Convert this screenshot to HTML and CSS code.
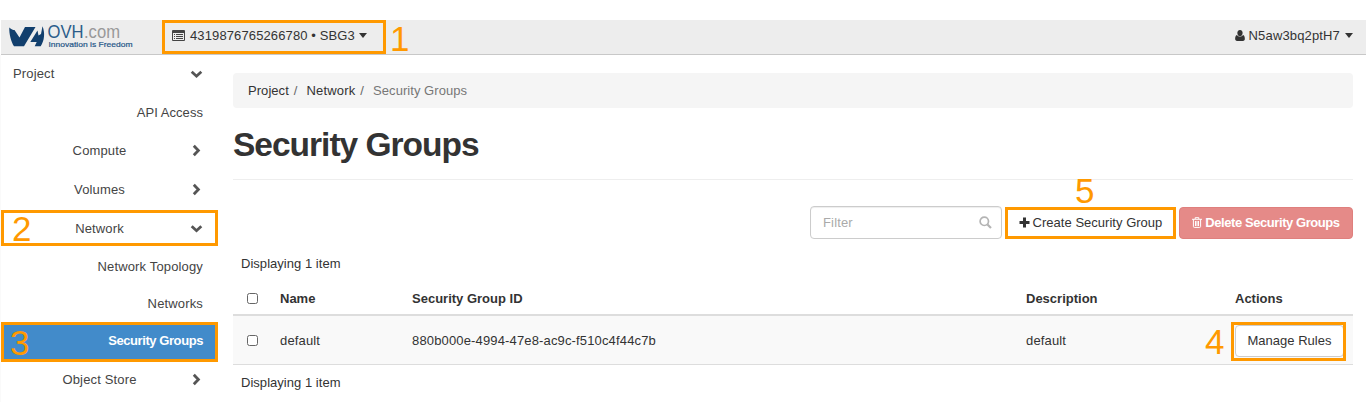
FILE: index.html
```html
<!DOCTYPE html>
<html lang="en">
<head>
<meta charset="utf-8">
<title>Security Groups</title>
<link rel="stylesheet" href="styles.css">
</head>
<body>
<header class="topbar">
  <svg class="logo" width="128" height="30" viewBox="0 0 128 30">
    <path class="logo-mark" d="M.3 5.500C2.500 7.500 4 8 5.500 8L10.500 15.500L16 5H26.500L15 24.300H5C2 19.500 0 12 .3 5.500Z"/>
    <path class="logo-mark" d="M33.500 4.300C36.200 11 35.500 18.500 31.700 24.300H25.700L27.700 20H21.300L28.500 8.500L29.500 13.500L32 12Z"/>
    <text class="logo-name" x="38.500" y="16" textLength="36" lengthAdjust="spacingAndGlyphs">OVH</text>
    <text class="logo-com" x="75" y="16" textLength="36" lengthAdjust="spacingAndGlyphs">.com</text>
    <text class="logo-tag" x="39.500" y="24.500" textLength="84" lengthAdjust="spacingAndGlyphs">Innovation is Freedom</text>
  </svg>
  <div class="context">
    <svg width="13" height="11" viewBox="0 0 13 11"><path fill="#444" fill-rule="evenodd" d="M1 0H12Q13 0 13 1V10Q13 11 12 11H1Q0 11 0 10V1Q0 0 1 0ZM1 3V10H12V3ZM2 4H3V5H2ZM4 4H11V5H4ZM2 6H3V7H2ZM4 6H11V7H4ZM2 8H3V9H2ZM4 8H11V9H4Z"/></svg>
    <span class="context-name">4319876765266780 • SBG3</span><i class="caret"></i>
  </div>
  <div class="user">
    <svg width="10" height="11" viewBox="0 0 10 11"><path fill="#333" d="M5 0C8.700 0 8.400 6 5 6.200C1.600 6 1.300 0 5 0ZM2 5C3.500 7.200 6.500 7.200 8 5C9.600 5.400 10 7.500 9.800 9.600Q9.500 11 8 11H2Q.5 11 .2 9.600C0 7.500 .4 5.400 2 5Z"/></svg>
    <span class="user-name">N5aw3bq2ptH7</span><i class="caret"></i>
  </div>
</header>
<div class="layout">
  <nav class="sidebar">
    <div class="item top"><span class="t-project">Project</span><svg class="chev" viewBox="0 0 13 13"><path d="M1.700 3.700L6.500 8.200L11.300 3.700"/></svg></div>
    <div class="item leaf api"><span class="t-api">API Access</span></div>
    <div class="item group"><span class="t-compute">Compute</span><svg class="chev" viewBox="0 0 13 13"><path d="M3.800 1.700L8.400 6.500L3.800 11.300"/></svg></div>
    <div class="item group"><span class="t-volumes">Volumes</span><svg class="chev" viewBox="0 0 13 13"><path d="M3.800 1.700L8.400 6.500L3.800 11.300"/></svg></div>
    <div class="item group"><span class="t-network">Network</span><svg class="chev" viewBox="0 0 13 13"><path d="M1.700 4.200L6.500 8.700L11.300 4.200"/></svg></div>
    <div class="item leaf"><span class="t-topology">Network Topology</span></div>
    <div class="item leaf"><span class="t-networks">Networks</span></div>
    <div class="item leaf active"><span class="t-groups">Security Groups</span></div>
    <div class="item group"><span class="t-store">Object Store</span><svg class="chev" viewBox="0 0 13 13"><path d="M3.800 1.700L8.400 6.500L3.800 11.300"/></svg></div>
  </nav>
  <main class="content">
    <div class="breadcrumb"><span class="bc1">Project</span><i class="slash">/</i><span class="bc2">Network</span><i class="slash">/</i><span class="bc3">Security Groups</span></div>
    <h1 class="title">Security Groups</h1>
    <div class="toolbar">
      <div class="filter"><span>Filter</span><svg width="13" height="13" viewBox="0 0 13 13" fill="none" stroke="#b4b4b4" stroke-width="1.700"><circle cx="5.300" cy="5.300" r="4.200"/><path stroke-width="2.200" d="M8.500 8.500L12 12"/></svg></div>
      <button class="btn create"><svg width="11" height="11" viewBox="0 0 11 11"><path fill="#333" d="M4 .5H7V4H10.500V7H7V10.500H4V7H.5V4H4Z"/></svg><span class="t-create">Create Security Group</span></button>
      <button class="btn danger"><svg width="10" height="11" viewBox="0 0 10 11"><path fill="none" stroke="#fff" d="M0 2.300H10M3.200 2V.7H6.800V2M1.400 2.300V9.500Q1.400 10.400 2.300 10.400H7.700Q8.600 10.400 8.600 9.500V2.300M3.500 4V9M5 4V9M6.500 4V9"/></svg><span class="t-delete">Delete Security Groups</span></button>
    </div>
    <div class="count first"><span>Displaying 1 item</span></div>
    <div class="row head"><i class="check"></i><span class="t-name">Name</span><span class="t-id">Security Group ID</span><span class="t-desc">Description</span><span class="t-actions">Actions</span></div>
    <div class="row data"><i class="check"></i><span class="t-default">default</span><span class="t-uuid">880b000e-4994-47e8-ac9c-f510c4f44c7b</span><span class="t-default">default</span><button class="btn manage"><span class="t-manage">Manage Rules</span></button></div>
    <div class="count"><span>Displaying 1 item</span></div>
  </main>
</div>
<div class="mark box1"></div><div class="num num1">1</div>
<div class="mark box2"></div><div class="num num2">2</div>
<div class="mark box3"></div><div class="num num3">3</div>
<div class="mark box4"></div><div class="num num4">4</div>
<div class="mark box5"></div><div class="num num5">5</div>
</body>
</html>
```
FILE: styles.css
```css
* { box-sizing: border-box; }
body {
  margin: 0; padding-top: 20px; height: 402px; overflow: hidden; position: relative;
  background: #fff; color: #333;
  font: 13px/18px "Liberation Sans", Arial, sans-serif; letter-spacing: .15px;
}
svg { flex: none; display: block; }
span { white-space: nowrap; }
i { font-style: normal; }

.topbar { display: flex; align-items: center; height: 35px; margin-left: 1px; background: #ededed; border-bottom: 1px solid #c8c8c8; padding: 0 13px 3px 8px; }
.logo { margin-top: 3px; }
.logo-mark { fill: #123f6d; }
.logo-name { font-size: 18px; fill: #2b5c8a; letter-spacing: 0; }
.logo-com { font-size: 18px; fill: #999; letter-spacing: 0; }
.logo-tag { font-size: 8px; fill: #1f5688; stroke: #1f5688; stroke-width: .2px; letter-spacing: 0; }
.context { display: flex; align-items: center; margin-left: 35px; }
.context-name { margin: 0 4px 0 5px; letter-spacing: .12px; }
.user { display: flex; align-items: center; margin-left: auto; }
.user-name { margin: 0 5px 0 4px; }
.caret { border: 4px solid transparent; border-top: 5px solid #333; border-bottom: 0; }

.layout { display: flex; height: 347px; }
.sidebar { width: 217px; border-left: 1px solid #fafafa; color: #444; }
.item { display: flex; align-items: center; justify-content: flex-end; height: 39px; padding-right: 14px; }
.top { height: 38px; justify-content: space-between; padding-left: 12px; }
.leaf { height: 37px; }
.api { height: 38px; padding-top: 1px; }
.group > span { flex: 1; text-align: center; padding-left: 8px; }
.active { background: #428bca; color: #fff; font-weight: bold; letter-spacing: -.42px; height: 38px; }
.chev { width: 13px; height: 13px; fill: none; stroke: #555; stroke-width: 2.8; }
.t-api { letter-spacing: .05px; }

.content { flex: 1; margin: 18px 13px 0 16px; }
.breadcrumb { height: 35px; display: flex; align-items: center; padding-left: 15px; background: #f5f5f5; border-radius: 4px; }
.slash { color: #666; margin: 0 9px 0 5px; }
.bc1 { letter-spacing: .05px; }
.bc3 { color: #777; letter-spacing: .05px; }
.title { margin: 17px 0 0; height: 55px; border-bottom: 1px solid #eee; font-size: 33.5px; line-height: 39px; letter-spacing: -1px; }
.toolbar { display: flex; justify-content: flex-end; align-items: center; margin-top: 26px; height: 33px; }
.filter { display: flex; align-items: center; justify-content: space-between; width: 192px; height: 33px; padding: 0 9px 0 12px; color: #aaa; border: 1px solid #ccc; border-radius: 4px; box-shadow: inset 0 1px 1px #eee; }
.btn { display: flex; align-items: center; justify-content: center; height: 32px; padding: 0; border: 1px solid #ccc; border-radius: 4px; background: #fff; color: #333; font: inherit; letter-spacing: inherit; }
.create { width: 169px; margin: 0 4px; gap: 3px; letter-spacing: .02px; }
.danger { width: 174px; gap: 3px; background: #e58a88; border-color: #df7f7d; color: #fff; font-weight: bold; letter-spacing: -.43px; }
.count { padding: 9px 8px 0; height: 32px; letter-spacing: .03px; }
.first { padding-top: 16px; height: 42px; }
.row { display: grid; grid-template-columns: 39px 132px 614px 209px 1fr; align-items: center; padding-left: 8px; }
.head { height: 35px; border-bottom: 2px solid #ddd; font-weight: bold; letter-spacing: 0; padding-top: 2px; }
.data { height: 49px; background: #f9f9f9; border-bottom: 1px solid #ddd; padding-top: 1px; }
.check { width: 11px; height: 11px; border: 1px solid #666; border-radius: 2.5px; margin-left: 6px; background: #fff; }
.manage { width: 109px; letter-spacing: .02px; }

.mark { position: absolute; border: 3px solid #ff9900; }
.num { position: absolute; color: #ff9900; font-size: 35px; line-height: 35px; letter-spacing: 0; }
.box1 { left: 162px; top: 20px; width: 224px; height: 34px; }
.box2 { left: 1px; top: 210px; width: 217px; height: 36px; }
.box3 { left: 1px; top: 322px; width: 217px; height: 40px; }
.box4 { left: 1231px; top: 322px; width: 115px; height: 39px; }
.box5 { left: 1005px; top: 207px; width: 171px; height: 32px; }
.num1 { left: 390px; top: 21px; }
.num2 { left: 12px; top: 211px; }
.num3 { left: 10px; top: 325px; }
.num4 { left: 1205px; top: 324px; }
.num5 { left: 1075px; top: 173px; }
```
